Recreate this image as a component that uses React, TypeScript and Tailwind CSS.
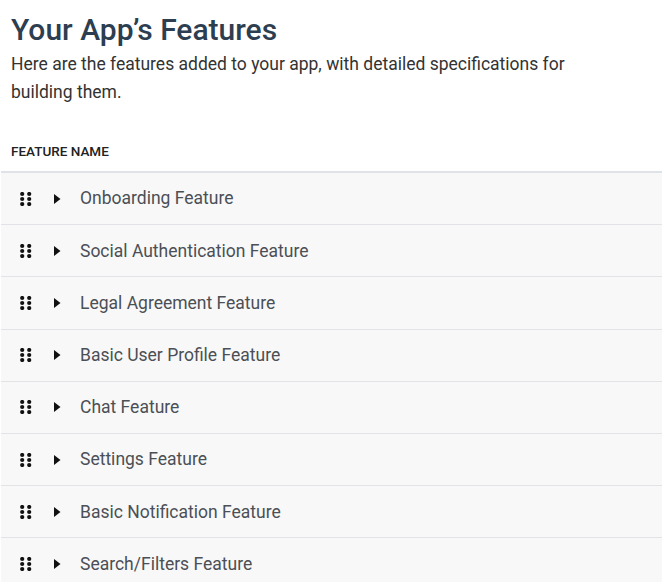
const features = [
  "Onboarding Feature",
  "Social Authentication Feature",
  "Legal Agreement Feature",
  "Basic User Profile Feature",
  "Chat Feature",
  "Settings Feature",
  "Basic Notification Feature",
  "Search/Filters Feature",
];

const DragHandle = () => (
  <svg width="12" height="14" viewBox="0 0 12 14" className="shrink-0">
    {[2, 7, 12].map((cy) => (
      <g key={cy}>
        <circle cx="2.2" cy={cy} r="2.1" fill="#111" />
        <circle cx="9.2" cy={cy} r="2.1" fill="#111" />
      </g>
    ))}
  </svg>
);

const Caret = () => (
  <svg width="7" height="10" viewBox="0 0 7 10" className="shrink-0">
    <path d="M0 0 L6.5 5 L0 10 Z" fill="#111" />
  </svg>
);

const App = () => {
  return (
    <div className="min-h-[582px] bg-white font-['Roboto',sans-serif] overflow-hidden">
      <div className="px-[11px] pt-[10px]">
        <h1 className="text-[30px] font-medium leading-[40px] text-[#2c3e50]">
          Your App’s Features
        </h1>
        <p className="max-w-[590px] text-[17.5px] leading-[28px] text-[#333]">
          Here are the features added to your app, with detailed specifications for
          building them.
        </p>
        <div className="mt-[37px] mb-[12px] text-[13.5px] font-medium uppercase leading-[16px] text-[#222]">
          Feature Name
        </div>
      </div>

      <div className="ml-px border-t-2 border-[#dfe2e6]">
        {features.map((name) => (
          <div
            key={name}
            className="flex h-[52.2px] items-center border-b border-[#e1e3e7] bg-[#f8f8f8]"
          >
            <div className="ml-[19px] flex items-center">
              <DragHandle />
            </div>
            <div className="ml-[22px] flex items-center">
              <Caret />
            </div>
            <span className="ml-[19px] text-[17.5px] text-[#4b4f56]">{name}</span>
          </div>
        ))}
      </div>
    </div>
  );
};

export default App;
